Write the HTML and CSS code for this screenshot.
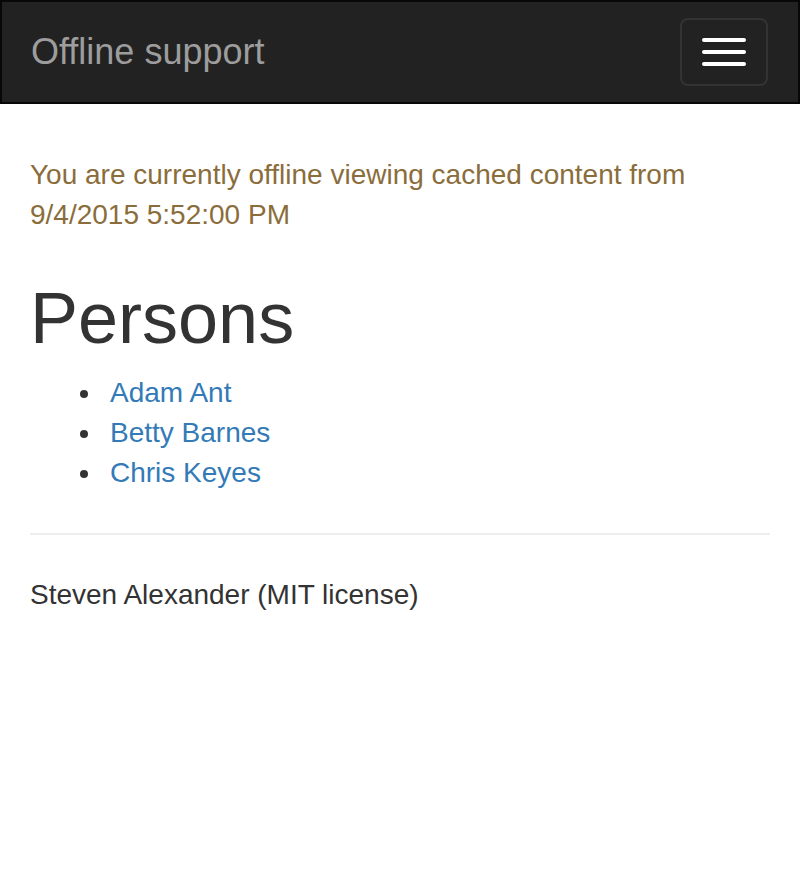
FILE: index.html
```html
<!DOCTYPE html>
<html lang="en">
<head>
<meta charset="utf-8">
<title>Offline support</title>
<link rel="stylesheet" href="styles.css">
</head>
<body>
<nav class="navbar">
  <a class="brand" href="#">Offline support</a>
  <button class="toggle" type="button" aria-label="Toggle navigation">
    <span class="bar"></span>
    <span class="bar"></span>
    <span class="bar"></span>
  </button>
</nav>
<main class="container">
  <p class="warning">You are currently offline viewing cached content from 9/4/2015 5:52:00 PM</p>
  <h1 class="title">Persons</h1>
  <ul class="persons">
    <li><a href="#">Adam Ant</a></li>
    <li><a href="#">Betty Barnes</a></li>
    <li><a href="#">Chris Keyes</a></li>
  </ul>
  <hr class="rule">
  <footer class="footer">Steven Alexander (MIT license)</footer>
</main>
</body>
</html>
```

FILE: styles.css
```css
html, body {
  margin: 0;
  padding: 0;
  background: #fff;
}
body {
  font-family: "Liberation Sans", Arial, Helvetica, sans-serif;
  font-size: 28px;
  line-height: 40px;
  color: #333;
}
.navbar {
  display: flex;
  align-items: center;
  justify-content: space-between;
  height: 100px;
  background: #222;
  border: 2px solid #080808;
}
.brand {
  padding-left: 29px;
  font-size: 36px;
  line-height: 40px;
  color: #9d9d9d;
  text-decoration: none;
}
.toggle {
  box-sizing: border-box;
  width: 88px;
  height: 68px;
  margin-right: 30px;
  padding: 0 20px;
  background: transparent;
  border: 2px solid #333;
  border-radius: 8px;
  display: flex;
  flex-direction: column;
  justify-content: center;
  align-items: center;
  gap: 8px;
}
.bar {
  display: block;
  width: 44px;
  height: 4px;
  border-radius: 2px;
  background: #fff;
}
.container {
  padding: 0 30px;
}
.warning {
  margin: 51px 0 0;
  color: #8a6d3b;
}
.title {
  margin: 44px 0 0;
  font-size: 72px;
  line-height: 79px;
  font-weight: 500;
  color: #333;
}
.persons {
  margin: 15px 0 0;
  padding-left: 80px;
  list-style: none;
}
.persons li::before {
  content: "";
  display: inline-block;
  width: 8px;
  height: 8px;
  border-radius: 50%;
  background: #333;
  margin-left: -30px;
  margin-right: 22px;
  vertical-align: 4px;
}
.persons a {
  color: #337ab7;
  text-decoration: none;
}
.rule {
  margin: 40px 0 0;
  border: 0;
  border-top: 2px solid #eee;
  height: 0;
}
.footer {
  margin-top: 40px;
}
```
